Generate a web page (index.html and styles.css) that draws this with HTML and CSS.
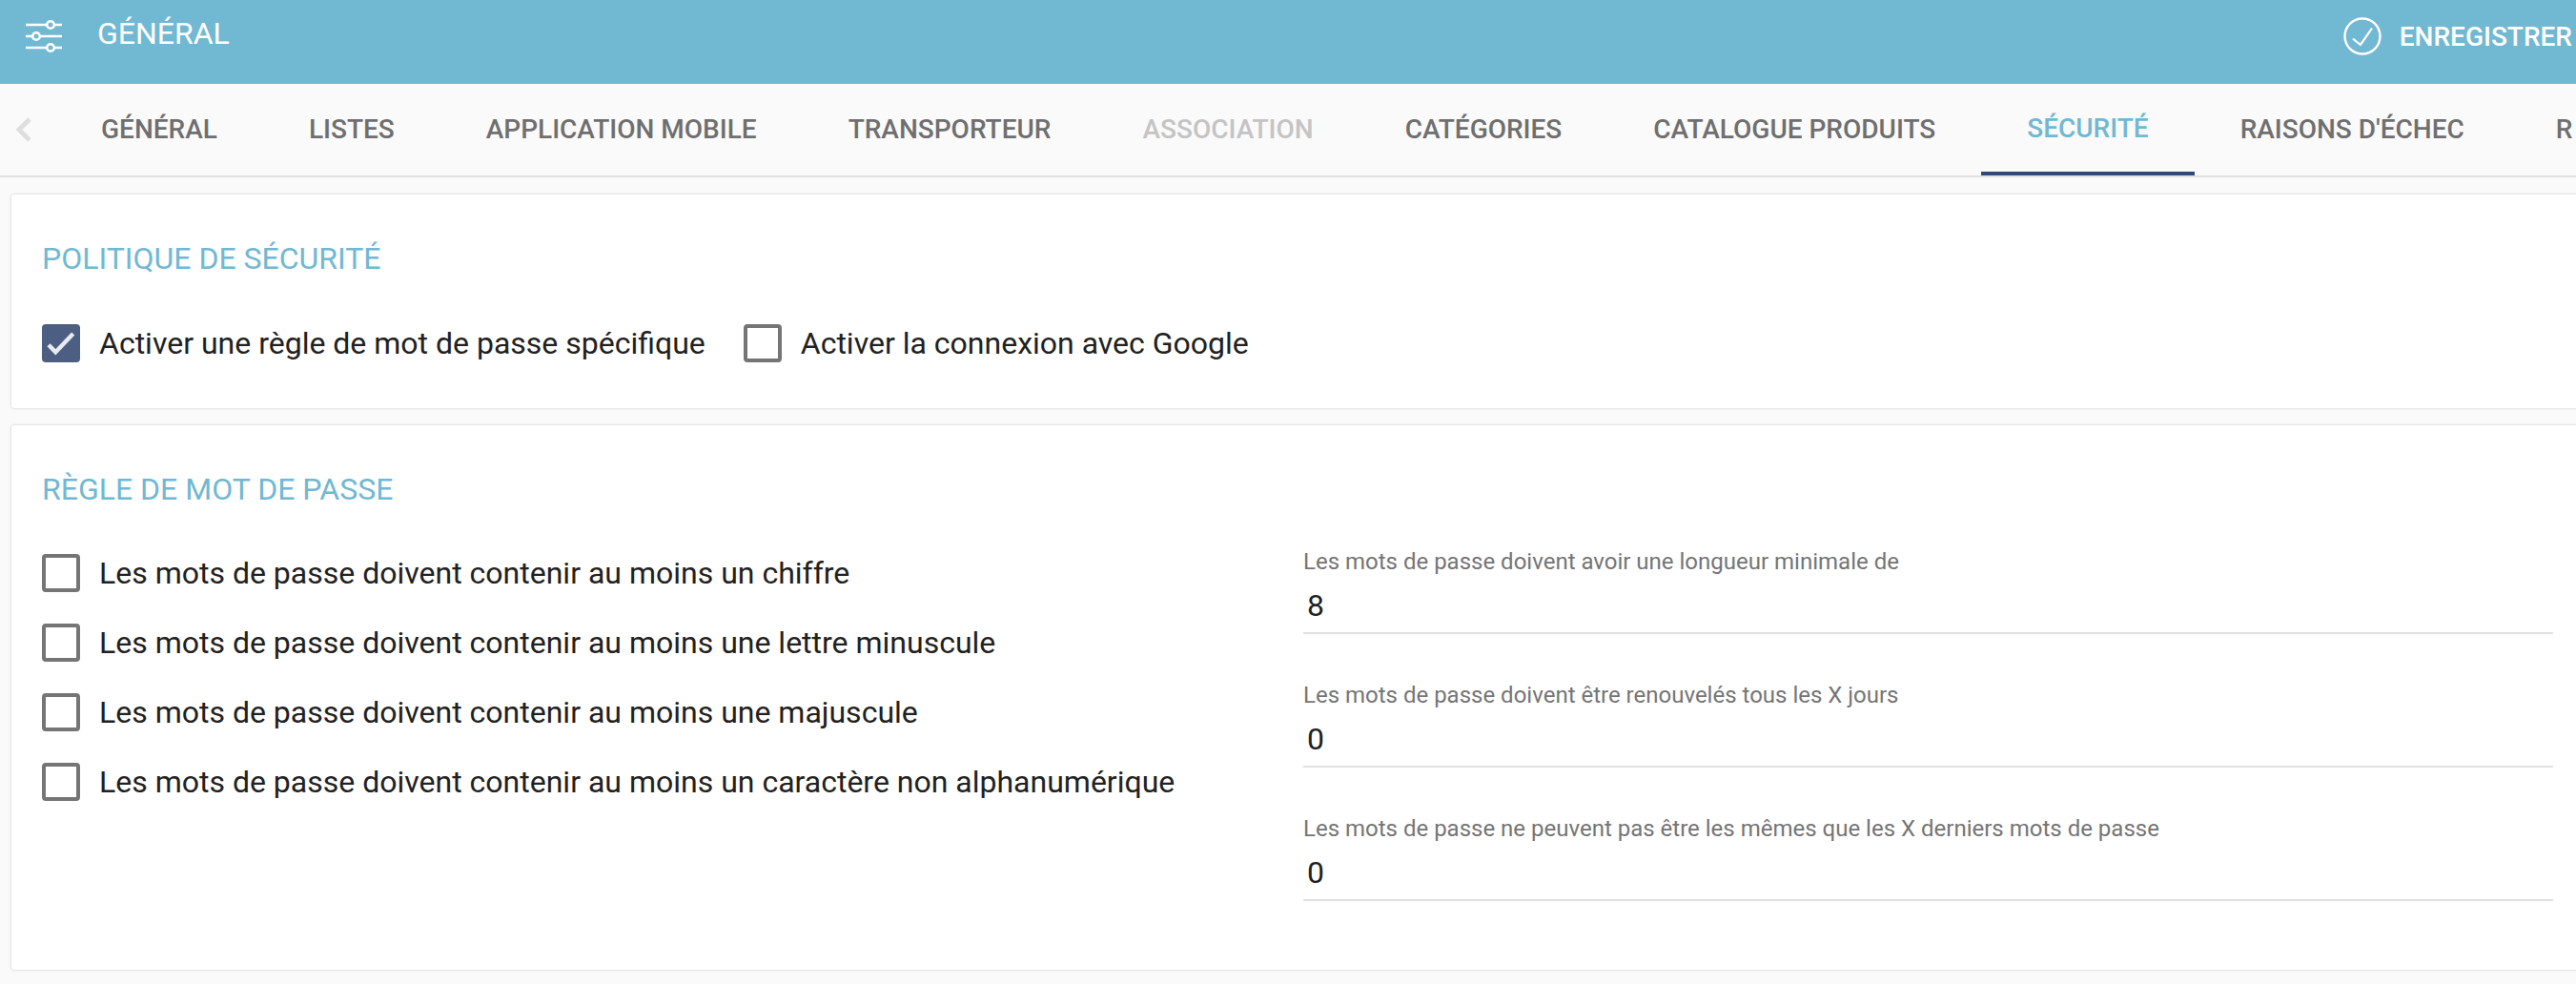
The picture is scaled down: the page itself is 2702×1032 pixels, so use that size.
FILE: index.html
```html
<!DOCTYPE html>
<html lang="fr">
<head>
<meta charset="utf-8">
<title>Général</title>
<link rel="stylesheet" href="styles.css">
</head>
<body>
<header class="topbar">
  <div class="topbar-left">
    <svg class="icon-sliders" viewBox="0 0 40 36" width="40" height="36" fill="none" stroke="#fff" stroke-width="2.6">
      <path d="M1 6H23M31 6H39M1 18H8M16 18H39M1 30H23M31 30H39"/>
      <circle cx="27" cy="6" r="3.800"/><circle cx="12" cy="18" r="3.800"/><circle cx="27" cy="30" r="3.800"/>
    </svg>
    <span class="title">GÉNÉRAL</span>
  </div>
  <div class="save">
    <svg viewBox="0 0 40 40" width="40" height="40" fill="none" stroke="#fff">
      <circle cx="20" cy="20" r="18.500" stroke-width="2.400"/>
      <path d="M10 22.700L18 29L30 11.700" stroke-width="2.200"/>
    </svg>
    <span>ENREGISTRER</span>
  </div>
</header>
<nav class="tabs">
  <div class="tab-arrow">
    <svg viewBox="0 0 16 26" width="16" height="26" fill="none" stroke="#dedede" stroke-width="4.800"><path d="M14 2L3 13L14 24"/></svg>
  </div>
  <a class="tab">GÉNÉRAL</a>
  <a class="tab">LISTES</a>
  <a class="tab">APPLICATION MOBILE</a>
  <a class="tab">TRANSPORTEUR</a>
  <a class="tab tab-disabled">ASSOCIATION</a>
  <a class="tab">CATÉGORIES</a>
  <a class="tab">CATALOGUE PRODUITS</a>
  <a class="tab tab-active">SÉCURITÉ</a>
  <a class="tab">RAISONS D'ÉCHEC</a>
  <a class="tab">R</a>
</nav>
<main class="content">
  <section class="card card-policy">
    <h2 class="card-title">POLITIQUE DE SÉCURITÉ</h2>
    <div class="check-inline">
      <label class="check"><span class="box box-on"><svg viewBox="0 0 40 40" width="40" height="40" fill="none" stroke="#e8ebf1" stroke-width="4.400"><path d="M7 21.700L14.300 29.300L32.700 10"/></svg></span>Activer une règle de mot de passe spécifique</label>
      <label class="check"><span class="box"></span>Activer la connexion avec Google</label>
    </div>
  </section>
  <section class="card card-rules">
    <h2 class="card-title">RÈGLE DE MOT DE PASSE</h2>
    <div class="rules">
      <div class="rules-checks">
        <label class="check"><span class="box"></span>Les mots de passe doivent contenir au moins un chiffre</label>
        <label class="check"><span class="box"></span>Les mots de passe doivent contenir au moins une lettre minuscule</label>
        <label class="check"><span class="box"></span>Les mots de passe doivent contenir au moins une majuscule</label>
        <label class="check"><span class="box"></span>Les mots de passe doivent contenir au moins un caractère non alphanumérique</label>
      </div>
      <div class="rules-fields">
        <div class="field"><div class="field-label">Les mots de passe doivent avoir une longueur minimale de</div><div class="field-value">8</div></div>
        <div class="field"><div class="field-label">Les mots de passe doivent être renouvelés tous les X jours</div><div class="field-value">0</div></div>
        <div class="field"><div class="field-label">Les mots de passe ne peuvent pas être les mêmes que les X derniers mots de passe</div><div class="field-value">0</div></div>
      </div>
    </div>
  </section>
</main>
</body>
</html>
```
FILE: styles.css
```css
* { box-sizing: border-box; }
html, body { margin: 0; height: 100%; }
body {
  width: 2702px; height: 1032px; overflow: hidden;
  background: #fafafa;
  font-family: Roboto, "Liberation Sans", sans-serif;
  color: #212121;
}
.topbar {
  height: 88px; background: #71b8d3; color: #fff;
  display: flex; justify-content: space-between; align-items: flex-start;
}
.topbar-left { display: flex; align-items: flex-start; padding: 20px 0 0 26px; }
.icon-sliders { display: block; }
.title { font-size: 32px; line-height: 32px; margin-left: 36px; margin-top: -1px; }
.save {
  display: flex; align-items: center; gap: 19px;
  font-size: 28px; font-weight: 500; white-space: nowrap;
  padding: 18px 4px 0 0;
}
.tabs {
  height: 98px; display: flex; border-bottom: 2px solid #e0e0e0;
  overflow: hidden; white-space: nowrap;
}
.tab-arrow { width: 58px; flex: none; display: flex; align-items: center; padding: 0 0 0 17px; }
.tab {
  padding: 0 48px; display: flex; align-items: center;
  font-size: 28px; font-weight: 500; color: #6f6f6f;
  height: 96px; padding-bottom: 1px; flex: none;
}
.tab-disabled { color: #c4c4c4; }
.tab-active { color: #71b8d3; border-bottom: 4px solid #2f4a75; padding-bottom: 0; }
.content { display: flex; flex-direction: column; gap: 18px; padding: 18px 0 0 12px; }
.card {
  width: 2720px; background: #fff; border-radius: 3px;
  box-shadow: 0 0 3px rgba(0,0,0,.22);
  padding: 0 0 0 32px;
}
.card-policy { height: 224px; padding-top: 49px; }
.card-rules { height: 571px; padding-top: 49px; }
.card-title {
  margin: 0; font-size: 32px; line-height: 36px; font-weight: 400; color: #71b8d3;
}
.check-inline { display: flex; gap: 40px; margin-top: 51px; }
.check {
  display: flex; align-items: center; gap: 20px;
  font-size: 32px; line-height: 40px; color: #212121; white-space: nowrap;
}
.box {
  width: 40px; height: 40px; flex: none; border: 4px solid #757575; border-radius: 4px; background: #fff;
  display: block;
}
.box-on { border: 0; background: #4c5f82; }
.box svg { display: block; }
.rules { display: flex; margin-top: 45px; }
.rules-checks { width: 1323px; display: flex; flex-direction: column; gap: 33px; padding-top: 5px; }
.rules-fields { width: 1311px; display: flex; flex-direction: column; gap: 44px; margin-top: -7px; }
.field { height: 96px; border-bottom: 2px solid #e0e0e0; }
.field-label { font-size: 24px; line-height: 28px; color: #757575; padding-top: 6px; height: 34px; }
.field-value { font-size: 32px; line-height: 36px; color: #212121; margin-top: 14px; padding-left: 4px; }
```
